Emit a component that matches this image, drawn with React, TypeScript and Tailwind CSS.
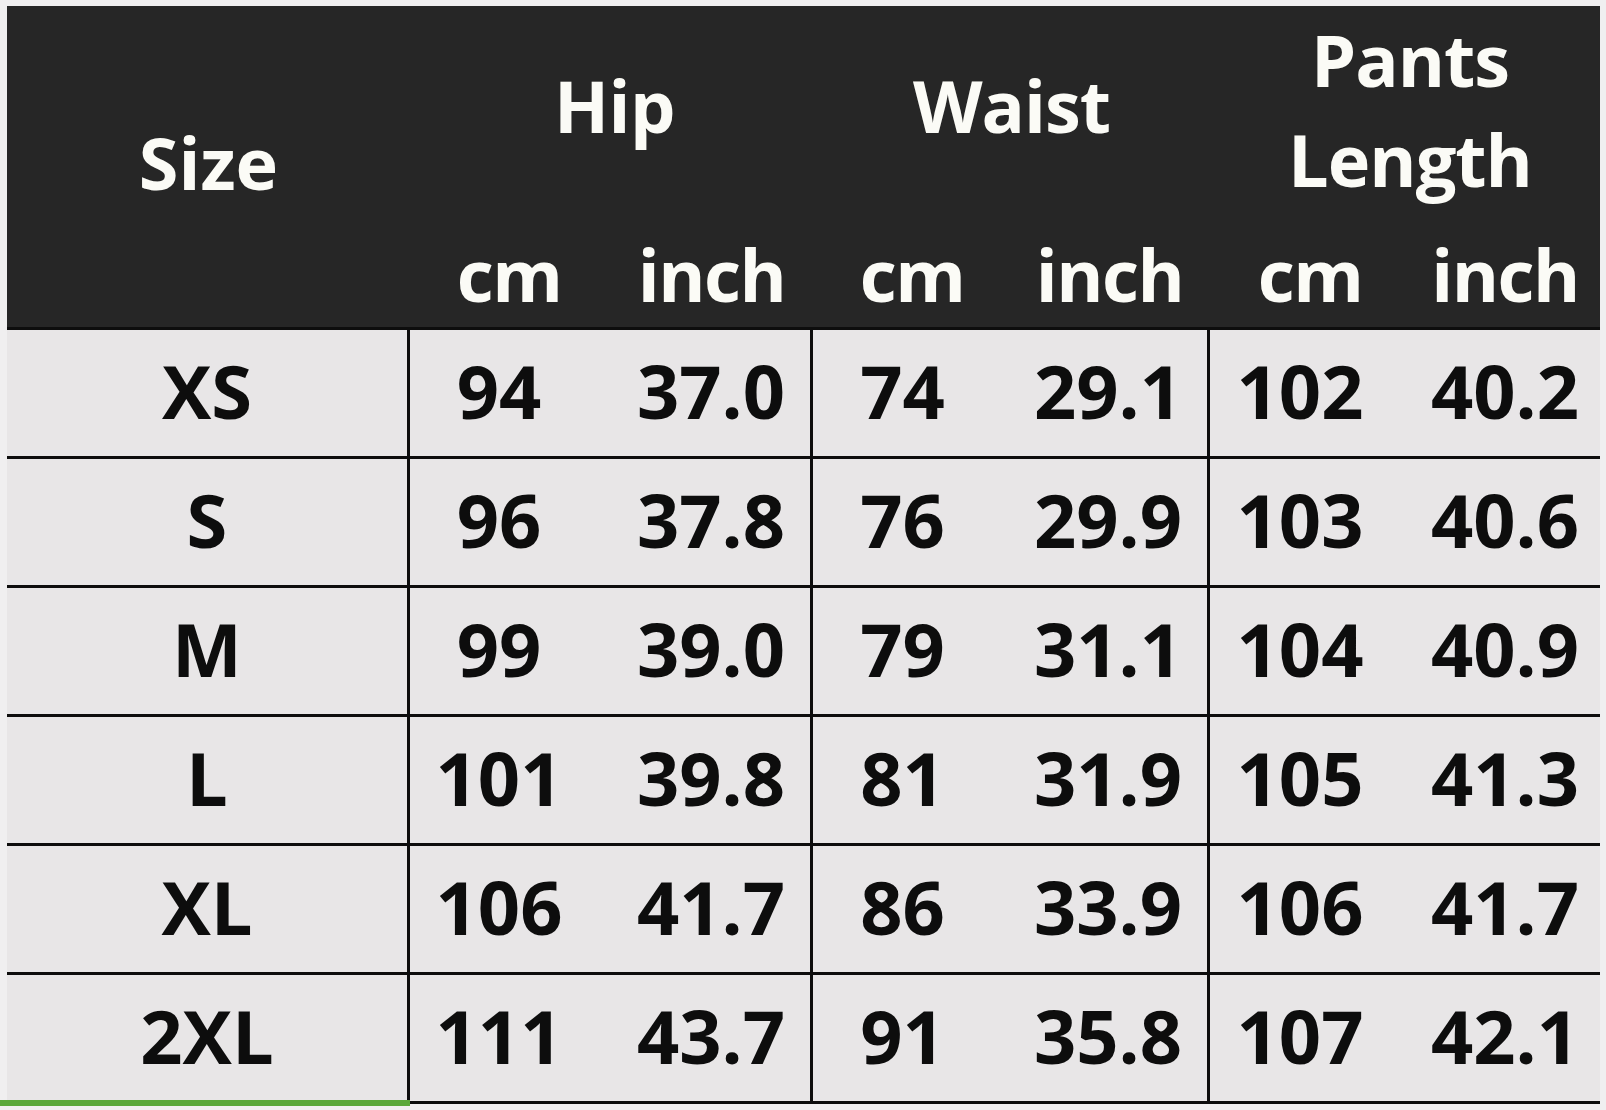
const rows = [
  { size: "XS", hip: ["94", "37.0"], waist: ["74", "29.1"], pants: ["102", "40.2"] },
  { size: "S", hip: ["96", "37.8"], waist: ["76", "29.9"], pants: ["103", "40.6"] },
  { size: "M", hip: ["99", "39.0"], waist: ["79", "31.1"], pants: ["104", "40.9"] },
  { size: "L", hip: ["101", "39.8"], waist: ["81", "31.9"], pants: ["105", "41.3"] },
  { size: "XL", hip: ["106", "41.7"], waist: ["86", "33.9"], pants: ["106", "41.7"] },
  { size: "2XL", hip: ["111", "43.7"], waist: ["91", "35.8"], pants: ["107", "42.1"] },
];

const font = "font-['Open_Sans','Noto_Sans',sans-serif] font-bold";

export default function App() {
  return (
    <div className={`relative w-[1606px] h-[1110px] overflow-hidden bg-[#f0eff0] pt-[6px] pl-[7px] ${font}`}>
      <div className="w-[1593px]">
        {/* header */}
        <div className="flex h-[324px] bg-[#262626] border-b-[3px] border-[#0d0d0d] text-[72px] leading-[72px] text-[#fbfbf6]">
          <div className="w-[403px] flex items-center justify-center pb-[10px]">Size</div>

          <div className="w-[403px] flex flex-col">
            <div className="h-[206px] flex items-center justify-center pb-[8px] pl-[6px] tracking-[-0.5px]">Hip</div>
            <div className="flex-1 flex items-end pb-[17px] tracking-[-1.5px]">
              <div className="w-[176px] pl-[22px] text-center">cm</div>
              <div className="flex-1 pl-[24px] text-center">inch</div>
            </div>
          </div>

          <div className="w-[397px] flex flex-col">
            <div className="h-[206px] flex items-center justify-center pb-[8px] tracking-[-1px]">Waist</div>
            <div className="flex-1 flex items-end pb-[17px] tracking-[-1.5px]">
              <div className="w-[176px] pl-[22px] text-center">cm</div>
              <div className="flex-1 pl-[20px] text-center">inch</div>
            </div>
          </div>

          <div className="w-[390px] flex flex-col">
            <div className="h-[206px] flex items-center justify-center pl-[10px] tracking-[-1px]">
              <div className="text-center leading-[100px]">
                Pants
                <br />
                Length
              </div>
            </div>
            <div className="flex-1 flex items-end pb-[17px] tracking-[-1.5px]">
              <div className="w-[180px] pl-[20px] text-center">cm</div>
              <div className="flex-1 pl-[20px] text-center">inch</div>
            </div>
          </div>
        </div>

        {/* body */}
        {rows.map((r) => (
          <div
            key={r.size}
            className="flex h-[129px] bg-[#e8e6e7] border-b-[3px] border-[#0d0d0d] text-[74px] leading-[74px] text-[#0d0d0d]"
          >
            <div className="w-[403px] border-r-[3px] border-[#0d0d0d] flex items-center justify-center pb-[4px]">
              {r.size}
            </div>
            <div className="w-[403px] border-r-[3px] border-[#0d0d0d] flex items-center pb-[4px]">
              <div className="w-[176px] pl-[2px] text-center">{r.hip[0]}</div>
              <div className="flex-1 pl-[26px] text-center">{r.hip[1]}</div>
            </div>
            <div className="w-[397px] border-r-[3px] border-[#0d0d0d] flex items-center pb-[4px]">
              <div className="w-[176px] pl-[3px] text-center">{r.waist[0]}</div>
              <div className="flex-1 pl-[20px] text-center">{r.waist[1]}</div>
            </div>
            <div className="w-[390px] flex items-center pb-[4px]">
              <div className="w-[180px] text-center">{r.pants[0]}</div>
              <div className="flex-1 pl-[20px] text-center">{r.pants[1]}</div>
            </div>
          </div>
        ))}
      </div>

      {/* video progress bar */}
      <div className="absolute left-0 top-[1100px] w-[410px] h-[6px] bg-[#5aa83a]" />
    </div>
  );
}
